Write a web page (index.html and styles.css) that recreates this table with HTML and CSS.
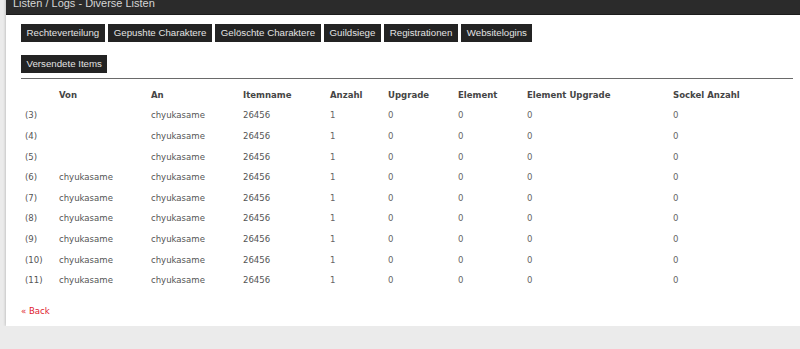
FILE: index.html
```html
<!DOCTYPE html>
<html lang="de">
<head>
<meta charset="utf-8">
<title>Listen / Logs - Diverse Listen</title>
<link rel="stylesheet" href="styles.css">
</head>
<body>
<div class="panel">
  <div class="panel-head">Listen / Logs - Diverse Listen</div>
  <div class="panel-body">
    <div class="btn-row">
      <a class="btn" href="#">Rechteverteilung</a>
      <a class="btn" href="#">Gepushte Charaktere</a>
      <a class="btn" href="#">Gelöschte Charaktere</a>
      <a class="btn" href="#">Guildsiege</a>
      <a class="btn" href="#">Registrationen</a>
      <a class="btn" href="#">Websitelogins</a>
    </div>
    <div class="btn-row">
      <a class="btn" href="#">Versendete Items</a>
    </div>
    <hr class="sep">
    <table class="list">
      <colgroup>
        <col class="c-idx"><col class="c-von"><col class="c-an"><col class="c-item"><col class="c-anz"><col class="c-upg"><col class="c-el"><col class="c-elup"><col class="c-sock">
      </colgroup>
      <thead>
        <tr><th></th><th>Von</th><th>An</th><th>Itemname</th><th>Anzahl</th><th>Upgrade</th><th>Element</th><th>Element Upgrade</th><th>Sockel Anzahl</th></tr>
      </thead>
      <tbody>
        <tr><td>(3)</td><td></td><td>chyukasame</td><td>26456</td><td class="n">1</td><td class="n">0</td><td class="n">0</td><td class="n">0</td><td class="n">0</td></tr>
        <tr><td>(4)</td><td></td><td>chyukasame</td><td>26456</td><td class="n">1</td><td class="n">0</td><td class="n">0</td><td class="n">0</td><td class="n">0</td></tr>
        <tr><td>(5)</td><td></td><td>chyukasame</td><td>26456</td><td class="n">1</td><td class="n">0</td><td class="n">0</td><td class="n">0</td><td class="n">0</td></tr>
        <tr><td>(6)</td><td>chyukasame</td><td>chyukasame</td><td>26456</td><td class="n">1</td><td class="n">0</td><td class="n">0</td><td class="n">0</td><td class="n">0</td></tr>
        <tr><td>(7)</td><td>chyukasame</td><td>chyukasame</td><td>26456</td><td class="n">1</td><td class="n">0</td><td class="n">0</td><td class="n">0</td><td class="n">0</td></tr>
        <tr><td>(8)</td><td>chyukasame</td><td>chyukasame</td><td>26456</td><td class="n">1</td><td class="n">0</td><td class="n">0</td><td class="n">0</td><td class="n">0</td></tr>
        <tr><td>(9)</td><td>chyukasame</td><td>chyukasame</td><td>26456</td><td class="n">1</td><td class="n">0</td><td class="n">0</td><td class="n">0</td><td class="n">0</td></tr>
        <tr><td>(10)</td><td>chyukasame</td><td>chyukasame</td><td>26456</td><td class="n">1</td><td class="n">0</td><td class="n">0</td><td class="n">0</td><td class="n">0</td></tr>
        <tr><td>(11)</td><td>chyukasame</td><td>chyukasame</td><td>26456</td><td class="n">1</td><td class="n">0</td><td class="n">0</td><td class="n">0</td><td class="n">0</td></tr>
      </tbody>
    </table>
    <a class="back" href="#">« Back</a>
  </div>
</div>
</body>
</html>
```
FILE: styles.css
```css
html, body {
  margin: 0;
  padding: 0;
}
body {
  background: #ebebeb;
  font-family: "DejaVu Sans Condensed", "DejaVu Sans", sans-serif;
  font-size: 9.5px;
  color: #555;
  overflow: hidden;
}
.panel {
  margin: -3px 0 0 6px;
  width: 794px;
  background: #fff;
  box-shadow: 0 0 3px rgba(0, 0, 0, 0.28);
}
.panel-head {
  box-sizing: border-box;
  height: 18px;
  padding: 0 7px;
  background: #2b2b2b;
  border-bottom: 1px solid #1c1c1c;
  color: #d6d6d6;
  font-family: "Liberation Sans", Arial, sans-serif;
  font-size: 11px;
  line-height: 12px;
}
.panel-body {
  padding: 9px 7px 9px 15px;
}
.btn-row {
  display: flex;
  gap: 3.5px;
  margin-bottom: 12.5px;
}
.btn-row + .btn-row {
  margin-bottom: 5px;
}
.btn {
  display: block;
  padding: 3px 5.5px;
  background: #232323;
  color: #e2e2e2;
  text-decoration: none;
  font-family: "Liberation Sans", Arial, sans-serif;
  font-size: 9.7px;
  line-height: 12px;
}
.sep {
  margin: 0 0 6px 0;
  border: 0;
  height: 1px;
  background: #6a6a6a;
}
.list {
  width: 772px;
  table-layout: fixed;
  border-collapse: collapse;
}
.c-idx { width: 34px; }
.c-von { width: 92px; }
.c-an { width: 92px; }
.c-item { width: 87px; }
.c-anz { width: 58px; }
.c-upg { width: 70px; }
.c-el { width: 69px; }
.c-elup { width: 146px; }
.c-sock { width: 124px; }
.list th,
.list td {
  padding: 0 0 0 4px;
  height: 20.6px;
  line-height: 12px;
  text-align: left;
  white-space: nowrap;
}
.list th {
  font-weight: bold;
  color: #454545;
}
.list td.n {
  color: #666;
}
.back {
  display: block;
  margin-top: 15px;
  color: #e0202f;
  text-decoration: none;
  line-height: 12px;
}
```
